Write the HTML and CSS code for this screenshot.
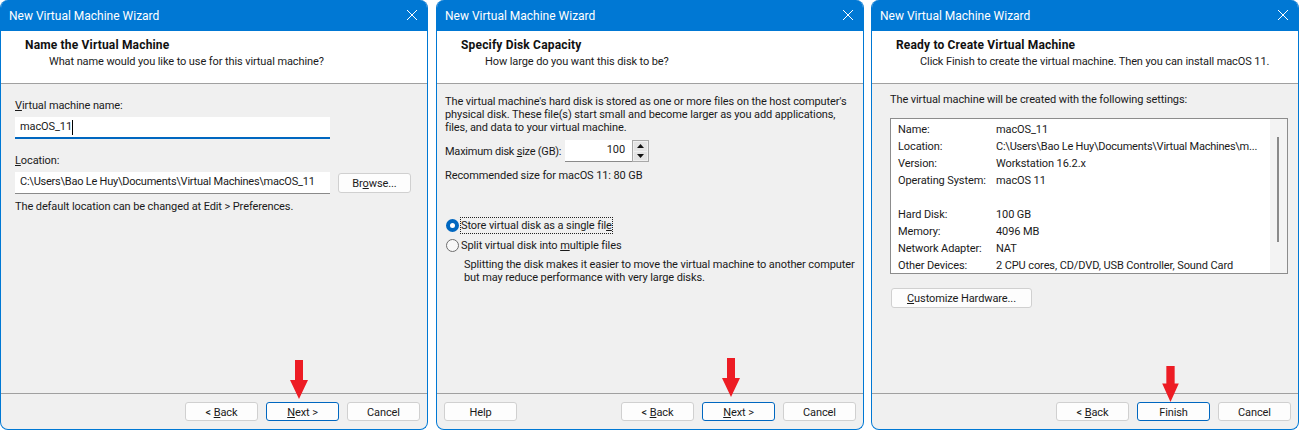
FILE: index.html
```html
<!DOCTYPE html>
<html lang="en">
<head>
<meta charset="utf-8">
<title>New Virtual Machine Wizard</title>
<link rel="stylesheet" href="styles.css">
</head>
<body>
<main class="desktop">

<section class="win">
  <header class="titlebar"><span>New Virtual Machine Wizard</span>
    <svg class="close" viewBox="0 0 12 12"><path d="M1 1l10 10M11 1L1 11"/></svg></header>
  <div class="head">
    <h1>Name the Virtual Machine</h1>
    <p>What name would you like to use for this virtual machine?</p>
  </div>
  <div class="body b1">
    <label class="lbl"><u>V</u>irtual machine name:</label>
    <div class="field focus">macOS_11<i class="caret"></i></div>
    <label class="lbl loc"><u>L</u>ocation:</label>
    <div class="locrow">
      <div class="field tight">C:\Users\Bao Le Huy\Documents\Virtual Machines\macOS_11</div>
      <button class="btn">Br<u>o</u>wse...</button>
    </div>
    <p class="hint">The default location can be changed at Edit &gt; Preferences.</p>
  </div>
  <footer class="foot">
    <button class="btn">&lt; <u>B</u>ack</button>
    <button class="btn primary"><u>N</u>ext &gt;</button>
    <button class="btn">Cancel</button>
  </footer>
  <svg class="arrow a1" viewBox="0 0 18 39"><path d="M5 0h8v20h5L9 39 0 20h5z"/></svg>
</section>

<section class="win">
  <header class="titlebar"><span>New Virtual Machine Wizard</span>
    <svg class="close" viewBox="0 0 12 12"><path d="M1 1l10 10M11 1L1 11"/></svg></header>
  <div class="head">
    <h1>Specify Disk Capacity</h1>
    <p>How large do you want this disk to be?</p>
  </div>
  <div class="body b2">
    <p class="para">The virtual machine's hard disk is stored as one or more files on the host computer's<br>physical disk. These file(s) start small and become larger as you add applications,<br>files, and data to your virtual machine.</p>
    <div class="sizerow">
      <label class="tight">Maximum disk <u>s</u>ize (GB):</label>
      <div class="spin"><span class="num">100</span></div>
      <div class="spinbtns">
        <span class="sb"><svg viewBox="0 0 7 4"><path d="M3.5 0L7 4H0z"/></svg></span>
        <span class="sb"><svg viewBox="0 0 7 4"><path d="M0 0h7L3.5 4z"/></svg></span>
      </div>
    </div>
    <p class="rec">Recommended size for macOS 11: 80 GB</p>
    <div class="radio r1"><i class="dot on"></i><span class="focusbox">Store virtual disk as a single fil<u>e</u></span></div>
    <div class="radio r2"><i class="dot"></i><span>Split virtual disk into <u>m</u>ultiple files</span></div>
    <p class="note">Splitting the disk makes it easier to move the virtual machine to another computer<br>but may reduce performance with very large disks.</p>
  </div>
  <footer class="foot">
    <button class="btn help">Help</button>
    <button class="btn">&lt; <u>B</u>ack</button>
    <button class="btn primary"><u>N</u>ext &gt;</button>
    <button class="btn">Cancel</button>
  </footer>
  <svg class="arrow a2" viewBox="0 0 18 39"><path d="M5 0h8v20h5L9 39 0 20h5z"/></svg>
</section>

<section class="win third">
  <header class="titlebar"><span>New Virtual Machine Wizard</span>
    <svg class="close" viewBox="0 0 12 12"><path d="M1 1l10 10M11 1L1 11"/></svg></header>
  <div class="head">
    <h1>Ready to Create Virtual Machine</h1>
    <p>Click Finish to create the virtual machine. Then you can install macOS 11.</p>
  </div>
  <div class="body b3">
    <p class="intro">The virtual machine will be created with the following settings:</p>
    <div class="summary">
      <dl class="rows">
        <dt>Name:</dt><dd>macOS_11</dd>
        <dt>Location:</dt><dd class="tight">C:\Users\Bao Le Huy\Documents\Virtual Machines\m...</dd>
        <dt>Version:</dt><dd>Workstation 16.2.x</dd>
        <dt>Operating System:</dt><dd>macOS 11</dd>
        <dt class="gap"></dt><dd class="gap"></dd>
        <dt>Hard Disk:</dt><dd>100 GB</dd>
        <dt>Memory:</dt><dd>4096 MB</dd>
        <dt>Network Adapter:</dt><dd>NAT</dd>
        <dt>Other Devices:</dt><dd>2 CPU cores, CD/DVD, USB Controller, Sound Card</dd>
      </dl>
      <div class="track"><i class="thumb"></i></div>
    </div>
    <button class="btn custom"><u>C</u>ustomize Hardware...</button>
  </div>
  <footer class="foot">
    <button class="btn">&lt; <u>B</u>ack</button>
    <button class="btn primary">Finish</button>
    <button class="btn">Cancel</button>
  </footer>
  <svg class="arrow a3" viewBox="0 0 18 39"><path d="M4.500 0h9v19H18L9 39 0 19h4.500z"/></svg>
</section>

</main>
</body>
</html>
```
FILE: styles.css
```css
* { box-sizing: border-box; }
html, body { margin: 0; padding: 0; background: #fff; }
body { font: 11px/13px Roboto, "Liberation Sans", sans-serif; letter-spacing: -0.1px; color: #1a1a1a; }
h1, p, dl, dd { margin: 0; }
u { text-underline-offset: 1px; }
.tight { letter-spacing: -0.23px; }

.desktop { display: flex; gap: 8px; height: 430px; overflow: hidden; }

.win {
  position: relative;
  width: 428px;
  height: 430px;
  display: flex;
  flex-direction: column;
  background: #f0f0f0;
  border: 1px solid #0078d4;
  border-top: 0;
  border-radius: 8px;
  overflow: hidden;
  flex: none;
}
.third { margin-left: -1px; }

.titlebar {
  height: 31px;
  flex: none;
  background: #0078d4;
  color: #fff;
  display: flex;
  align-items: center;
  justify-content: space-between;
  padding: 1px 9px 0 8px;
}
.titlebar span { font-size: 12px; letter-spacing: 0; }
.close { width: 12px; height: 12px; margin-top: -3px; }
.close path { stroke: #fff; stroke-width: 1; fill: none; }

.head {
  height: 53px;
  flex: none;
  background: #fff;
  border-bottom: 1px solid #a0a0a0;
  padding: 7px 0 0 24px;
}
.head h1 { font: 700 12px/15px Roboto, sans-serif; letter-spacing: 0.17px; color: #111; }
.head p { padding: 2px 0 0 24px; line-height: 13px; }

.body { flex: 1; padding-left: 14px; min-height: 0; }

.b1 { padding-top: 15px; }
.lbl { display: block; line-height: 13px; }
.loc { margin-top: 15px; }
.field {
  width: 315px;
  height: 22px;
  background: #fff;
  border-bottom: 1px solid #8a8a8a;
  padding: 3px 0 0 5px;
  margin-top: 5px;
  display: flex;
  align-items: flex-start;
  white-space: nowrap;
}
.focus { border-bottom: 2px solid #0067c0; }
.caret { width: 1px; height: 15px; background: #000; }
.locrow { display: flex; align-items: flex-start; gap: 8px; }
.locrow .btn { margin-top: 6px; height: 20px; padding-top: 0; }
.hint { margin-top: 6px; }

.btn {
  font: inherit;
  letter-spacing: inherit;
  color: #1a1a1a;
  width: 73px;
  height: 19px;
  padding: 1px 0 0;
  background: #fdfdfd;
  border: 1px solid #d0d0d0;
  border-radius: 3px;
  flex: none;
  line-height: 15px;
}
.primary { border-color: #0067c0; }

.foot {
  height: 36px;
  flex: none;
  border-top: 1px solid #a0a0a0;
  display: flex;
  justify-content: flex-end;
  gap: 8px;
  padding: 8px 7px 0 0;
}
.help { margin-right: auto; margin-left: 7px; }

.b2 { padding-top: 11px; padding-left: 8px; }
.para { white-space: nowrap; }
.sizerow { display: flex; align-items: flex-start; margin-top: 6px; }
.sizerow label { width: 120px; padding-top: 5px; white-space: nowrap; }
.spin {
  width: 67px;
  height: 22px;
  background: #fff;
  border-bottom: 1px solid #8a8a8a;
  text-align: right;
  padding: 3px 7px 0 0;
}
.spinbtns {
  width: 17px;
  height: 22px;
  border: 1px solid #a8a8a8;
  display: flex;
  flex-direction: column;
  gap: 1px;
  background: #f0f0f0;
  padding: 1px;
}
.sb { flex: 1; background: #e4e4e4; display: flex; align-items: center; justify-content: center; }
.sb svg { width: 7px; height: 4px; fill: #111; }
.rec { margin-top: 7px; }
.radio { display: flex; align-items: center; height: 16px; }
.r1 { margin-top: 35px; }
.r2 { margin-top: 4px; }
.dot {
  width: 13px; height: 13px;
  border-radius: 50%;
  border: 1px solid #6e6e6e;
  background: #f8f8f8;
  margin: 0 2px 0 1px;
  flex: none;
}
.dot.on { border: 4px solid #0067c0; background: #fff; }
.focusbox { outline: 1px dotted #222; line-height: 15px; }
.note { margin: 5px 0 0 19px; white-space: nowrap; }

.b3 { padding-top: 9px; padding-left: 18px; }
.summary {
  display: flex;
  width: 398px;
  height: 156px;
  margin-top: 12px;
  border: 1px solid #8c8c8c;
  background: #fff;
}
.rows {
  flex: 1;
  min-width: 0;
  display: grid;
  grid-template-columns: 98px 1fr;
  grid-auto-rows: 17px;
  padding: 3px 0 0 7px;
  overflow: hidden;
}
.rows dt, .rows dd { line-height: 15px; white-space: nowrap; }
.track { width: 17px; flex: none; background: #f3f3f3; display: flex; justify-content: center; padding-top: 18px; }
.thumb { width: 2px; height: 105px; background: #8a8a8a; display: block; margin-right: 1px; }
.custom { display: block; width: 141px; height: 20px; margin: 14px 0 0 1px; }

.arrow { position: absolute; width: 18px; height: 39px; fill: #ed1c24; }
.a1 { left: 289px; top: 360px; }
.a2 { left: 285px; top: 358px; }
.a3 { left: 289px; top: 366px; width: 19px; height: 36px; }
```
